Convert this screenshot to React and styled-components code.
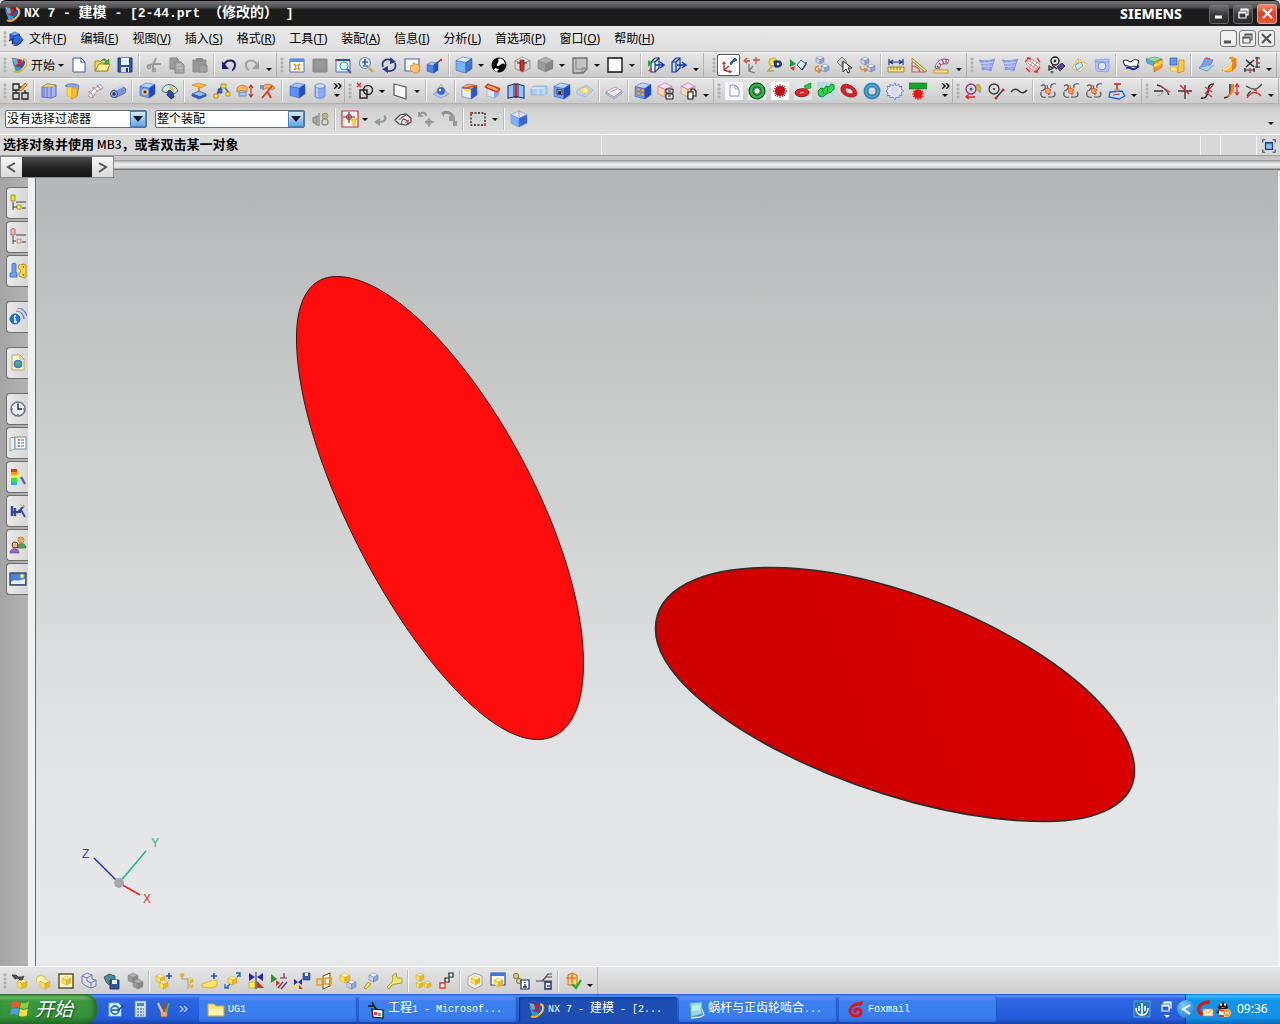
import React from 'react'
import styled, { createGlobalStyle, css } from 'styled-components'

const GlobalStyle = createGlobalStyle`
  * {
    box-sizing: border-box;
  }
  body {
    margin: 0;
    font-family: "Noto Sans", "Noto Sans CJK SC", sans-serif;
    font-size: 12px;
    color: #000;
    background: #d4d4d4;
  }
  button, select {
    font: inherit;
    color: inherit;
    margin: 0;
    padding: 0;
    border: 0;
    background: none;
  }
`

/* ---------- icon shapes: [path, fill, stroke, stroke width] ---------- */

const N = 'none'
const circ = (x, y, r) => `M${x - r} ${y}a${r} ${r} 0 1 0 ${2 * r} 0a${r} ${r} 0 1 0 ${-2 * r} 0z`
const rect = (x, y, w, h) => `M${x} ${y}h${w}v${h}h${-w}z`

const cube = (x, y, s, top = '#b4dcff', left = '#5b93f5', right = '#2a55c8', line = '#3457a8') => [
  [`M${x} ${y + s * 0.24}L${x + s * 0.5} ${y}L${x + s} ${y + s * 0.24}L${x + s * 0.5} ${y + s * 0.46}z`, top, line, 0.5],
  [`M${x} ${y + s * 0.24}L${x + s * 0.5} ${y + s * 0.46}V${y + s}L${x} ${y + s * 0.76}z`, left, line, 0.5],
  [`M${x + s} ${y + s * 0.24}L${x + s * 0.5} ${y + s * 0.46}V${y + s}L${x + s} ${y + s * 0.76}z`, right, line, 0.5],
]
// seen slightly from the right: wide front face, narrow side face
const box = (x, y, s, front = '#6c9ffa', top = '#b4d8ff', side = '#1f49c0', line = '#3450a8') => [
  [`M${x} ${y + s * 0.22}l${s * 0.62} ${s * 0.12}v${s * 0.66}l${-s * 0.62} ${-s * 0.16}z`, front, line, 0.5],
  [`M${x} ${y + s * 0.22}l${s * 0.4} ${-s * 0.22}l${s * 0.6} ${s * 0.1}l${-s * 0.38} ${s * 0.24}z`, top, line, 0.5],
  [`M${x + s * 0.62} ${y + s * 0.34}l${s * 0.38} ${-s * 0.24}v${s * 0.64}l${-s * 0.38} ${s * 0.26}z`, side, line, 0.5],
]
const gold = (x, y, s) => cube(x, y, s, '#fff7a8', '#ffe04a', '#e8b82c', '#c8a43a')
const pale = (x, y, s) => cube(x, y, s, '#eef4ff', '#c4d2f0', '#93a6d4', '#6a7aa8')
const grayBox = (x, y, s) => cube(x, y, s, '#b0b0b0', '#9a9a9a', '#868686', '#808080')
const nx = [
  ['M2 5l4 11c3 1 5 0 6-2L8 9z', '#2a9ec8', N],
  ['M9 10l5-7c2 3 1 7-3 10z', '#2458c8', N],
  ['M2 2l10 2-3 7-4-2z', '#e01c28', '#a81020', 0.5],
  ['M2 2l5 1 1 5-3 1z', '#58b8d0', N],
  ['M13 3c5 1 4 7 0 10-3 3-7 4-9 2', N, '#f2a81c', 2],
  ['M14 4c3 1 2 6-2 9', N, '#fff0a0', 0.8],
]
const page = (x, y, w, h, f = '#fff', k = '#3a57a8') => [
  [`M${x} ${y}h${w - 4}l4 4v${h - 4}h${-w}z`, f, k, 1],
  [`M${x + w - 4} ${y}v4h4`, N, k, 1],
]
const curve = (accent) => [
  ['M2 4c3-2 5-1 4 2-1 2-2 3-4 3M2 10c-1 4 1 6 5 5', N, '#555', 1.2],
  ['M17 2c-4-1-6 1-5 4M9 15h4c3 0 4-3 2-5', N, '#555', 1.2],
  ['M6 6l6 2M8 3l2 10', N, accent, 1.2],
  ['M6 6l5 1v5l-4-1z', '#ffa24a', '#e0482a', 0.7],
]

const ICONS = {
  nx,
  part: [
    ...cube(2, 1, 11, '#68a4ff', '#2766d8', '#143e9c', '#14387c'),
    ['M6 6l6-2 5 6-5 5-7-1z', '#2b69d5', '#0e2f7d', 0.8],
    ['M1 11l4-2v6M6 16h4l5-3', N, '#172c5e', 1.4],
  ],
  new: page(3, 2, 12, 14),
  open: [
    ['M2 15V5h5l2 2h6v8z', '#f3d45c', '#a68b20', 1],
    ['M2 15l4-7h11l-3 7z', '#ffee98', '#a68b20', 1],
    ['M8 5c2-3 4-3 6 0l2-2v5h-5l2-2c-2-2-3-2-5-1z', '#44b830', '#217818', 0.5],
  ],
  save: [
    [rect(2, 2, 14, 14), '#32549f', '#1d3470', 1],
    [rect(5, 2, 8, 7), '#e6f3ff', N],
    [rect(5, 11, 8, 5), '#d7dce8', N],
    [rect(10, 12, 2, 4), '#24345c', N],
  ],
  cut: [
    ['M11 2L8 9v6M2 10l6-2h8', N, '#9c9c9c', 2],
    [circ(4, 11, 1.6), N, '#9c9c9c', 1.6],
    [circ(9, 14, 1.6), N, '#9c9c9c', 1.6],
  ],
  copy: [
    ['M2 2h7l2 3v8H2z', '#9c9c9c', '#858585', 1],
    ['M7 6h6l3 3v8H7z', '#a8a8a8', '#858585', 1],
    ['M9 9h4M9 12h5', N, '#ccc', 1],
  ],
  paste: [
    [rect(2, 4, 13, 12), '#989898', '#8a8a8a', 1],
    [rect(5, 2, 7, 4), '#8b8b8b', N],
    ['M8 9h8v7H8z', '#9f9f9f', '#8a8a8a', 1],
  ],
  undo: [['M4 9c2-6 11-6 11 0 0 3-2 5-3 5', N, '#16206c', 2], ['M2 5v8h7z', '#16206c', N]],
  redo: [['M14 9c-2-6-11-6-11 0 0 3 2 5 3 5', N, '#a1a1a1', 2], ['M16 5v8H9z', '#a1a1a1', N]],
  fit: [
    [rect(2, 3, 14, 13), '#fff', '#4a70b8', 1],
    [rect(2, 3, 14, 3), '#5a90e0', N],
    ['M6 8l6 6M12 8l-6 6', N, '#f08a20', 1.8],
    ['M8 10h2v2H8z', '#fff', N],
  ],
  fill: [[rect(2, 3, 14, 13), '#929292', '#8a8a8a', 1], ['M5 6h8v7H5z', '#999', N]],
  zoomArea: [
    [rect(2, 4, 14, 12), '#e3eefc', '#3f6fc0', 1],
    ['M2 4h14', N, '#2850a8', 2],
    [circ(10, 10, 4), '#d2f6fa', '#558e9c', 1],
    ['M13 13l4 4', N, '#2a62c4', 2],
    [circ(2, 4, 1), '#e33', N],
    [circ(16, 16, 1), '#e33', N],
  ],
  zoom: [
    [circ(8, 7, 5.5), '#d8eeff', '#7a8cb0', 1.2],
    ['M5 6h6M8 3v6M6 10h5', N, '#17307c', 1.2],
    ['M12 12l4 4', N, '#d39b4a', 2.4],
  ],
  rotate: [
    ['M3 11C1 5 6 2 11 4M15 7c2 6-3 10-9 7', N, '#273d88', 1.8],
    ['M10 1l6 5-6 2zM8 17l-6-4 6-3z', '#273d88', N],
  ],
  pan: [
    [rect(2, 3, 14, 12), '#f4f8ff', '#4f70a8', 1.2],
    ['M8 9l2 1V7h2v2l3-1 2 4-2 5h-4l-4-4z', '#ffc76c', '#cf8426', 0.7],
  ],
  perspective: [
    ...box(1, 6, 11, '#4c86ec', '#9cc8ff', '#2450b8'),
    ['M8 9l7-5', N, '#26459c', 1.2],
    [circ(15, 4, 1.3), '#e02828', N],
  ],
  shaded: box(1, 1, 16, '#74b4fa', '#d8eeff', '#3f74d4'),
  bw: [
    [circ(9, 9, 7), '#000', '#000', 1],
    ['M8 3c4-2 7 2 7 6-3-4-4 1-8 1-1-3 3-3 1-7zM5 12l4 1-2 3-3-2z', '#fff', N],
  ],
  section: [
    ...cube(2, 1, 15, '#f7eeee', '#e6d5d5', '#d8d0d0', '#555'),
    ['M7 4h4v10l-2 1-2-1z', '#c82f2f', '#7e1919', 0.8],
    ['M4 7h3M11 7h3', N, '#333', 1],
  ],
  grayCube: grayBox(2, 1, 15),
  sheet: [
    ['M2 2h14v11l-4 4H2z', '#c2c2c2', '#707070', 1.3],
    ['M5 2v11h11M11 17v-5h5', N, '#858585', 1],
  ],
  white: [[rect(2, 2, 14, 14), '#fff', '#111', 1.4]],
  clipA: [
    ['M4 6l4-4h4v10l-4 4H4z', '#eaf2ff', '#17378c', 1.2],
    ['M4 6h4v10M8 6l4-4', N, '#17378c', 1.2],
    ['M8 9h8M13 6l4 3-4 3', N, '#1437b4', 1.5],
    ['M1 4l4 3-4 4z', '#29a42e', N],
    ['M1 15l4-4v5z', '#df3428', N],
  ],
  clipB: [
    ['M2 6l4-4h4v10l-4 4H2z', '#c4d9fa', '#17378c', 1.2],
    ['M2 6h4v10M6 6l4-4', N, '#17378c', 1.2],
    ['M7 9h8M12 6l4 3-4 3', N, '#1437b4', 1.5],
  ],
  csys: [
    ['M4 8v6l6 2M4 14l5-4', N, '#c5302a', 1.4],
    ['M2 8l2-3 2 3zM9 14l4 2-4 1z', '#c5302a', N],
    ['M10 7l5-5 2 2-4 2-2 3z', '#2f61c4', '#18357c', 0.8],
  ],
  csysOrigin: [
    ['M1 5h6M4 2L1 5l3 2M10 4h7M13 1v7', N, '#d64c38', 1.3],
    ['M6 8v7l6 2M6 15l4-5', N, '#777', 1.3],
  ],
  csysView: [
    [circ(7, 6, 4), '#ffe33c', '#c0a424', 1],
    ['M8 5h4c4-1 5 5 1 6H9z', '#203b98', '#0c1d5c', 1],
    [circ(12, 8, 1.3), '#ff8', N],
    ['M6 10l-4 5h6', N, '#b8a04a', 1.4],
  ],
  moveLayer: [
    ['M1 3l6 5-6 3z', '#24983a', N],
    ['M1 12l5-2-1 5z', '#e03426', N],
    ['M8 9l4-5 5 4-4 6z', '#dce8fc', '#3b5b9c', 1],
    ['M13 14l4-6v-2', N, '#223e87', 1.3],
  ],
  stackA: [
    ...pale(4, 0, 8),
    ...pale(9, 8, 8),
    ['M7 10c-4 0-5 4-2 5h3M6 12l3 3-3 2', N, '#dd8735', 1.4],
  ],
  pick: [
    ['M2 6l5-5 5 5-5 5zM7 11V6', '#cdd0d7', '#777', 1],
    ['M8 5v11l3-3 2 4 2-1-2-4h4z', '#fff', '#222', 1],
  ],
  stackB: [
    ...pale(3, 1, 8),
    ...pale(9, 8, 8),
    ['M2 10c0 4 2 4 6 4M6 12l3 2-3 2', N, '#e0862a', 1.3],
  ],
  distance: [
    ['M2 3v6M16 3v6M3 6h12M6 4L3 6l3 2M12 4l3 2-3 2', N, '#1a3290', 1.2],
    [rect(1, 11, 16, 5), '#ffe785', '#a5812b', 1],
    ['M4 11v3M7 11v3M10 11v3M13 11v3', N, '#8b6c25', 1],
  ],
  angle: [
    ['M2 2l15 13-2 1L2 5z', '#ffe787', '#a88a30', 1],
    ['M2 6v10h13M2 10c5 0 7 2 8 6', N, '#d45050', 1.2],
  ],
  arc: [
    ['M2 12C3 5 9 1 16 4l-2 4C9 7 7 9 6 13z', '#e8e6f8', '#7056a0', 1],
    ['M4 10l2 2M6 7l2 2M9 4l2 4M13 3v4', N, '#d0342b', 1.2],
    [rect(1, 14, 14, 3), '#ffe384', '#b58b35', 0.8],
  ],
  surface: [
    ['M1 4c5 1 10 1 16-1-2 4-3 8-4 12-4-2-6-2-9-1 1-4-1-7-3-10z', '#8f9ff4', '#6a7ee0', 0.6],
    ['M2 7c5 1 8 0 13-1M4 10c4 1 6 0 10 0', N, '#c8d2ff', 1.2],
    ['M6 5l2 8M11 4l-1 9', N, '#b8c4ff', 0.8],
  ],
  mesh: [
    ['M2 8l6-5 8 5-6 8z', '#fdf5ef', '#c88878', 0.8],
    ['M4 7l8 6M6 5l8 6M10 4l-5 8M13 6l-5 8', N, '#9a8078', 0.8],
    ['M1 6l4-4M3 2h3v2M16 6l-3-4M16 11l-4 5M14 16h-3v-2M2 12l4 4', N, '#e33020', 1.3],
  ],
  wheel: [
    [circ(8, 5, 4), N, '#222', 1.4],
    [circ(8, 5, 1.3), '#222', N],
    ['M2 10l4 2-4 2zM5 9l5 4', N, '#222', 1.2],
    ['M10 11l5-4 3 3-5 5z', '#58429a', '#2a174b', 0.8],
    [circ(5, 16, 1.6), '#3b8e4a', N],
  ],
  sheetGold: [
    ['M2 12l6-9 9 5-7 8z', '#fff3ba', '#d9b352', 0.9],
    ['M6 7l7 2M9 4l-3 8M12 6l-4 7', N, '#f0a631', 1],
    ['M5 9l6-3 2 4-6 4z', '#c8eaff', '#4e8ed0', 0.8],
  ],
  surfaceB: [
    ['M2 4l14-1v9l-1 4-12-1z', '#b7c9fb', '#7f96e0', 0.7],
    [circ(9, 10, 4), '#dce7ff', '#5d7bd0', 0.9],
    ['M2 6h14', N, '#7892df', 0.8],
  ],
  sew: [
    ['M1 5c3-2 5 0 8 1 2-3 5-3 8-1l-2 6c-3-2-5 0-7 0-2-1-3-2-5-1z', '#fafaff', '#222', 1],
    ['M4 12c4-2 5 2 8 1 2 0 3-2 5-3', N, '#192b92', 2],
  ],
  thicken: [
    ['M1 3l9-2 7 2-8 3z', '#8be4a2', '#58a070', 0.7],
    ['M1 3l8 3v4L2 7z', '#48b4e0', '#428fb0', 0.7],
    ['M9 6l8-3v8l-8 5z', '#ff9b23', '#be5c12', 0.7],
    ['M9 10l8-4', N, '#ffe94b', 2],
  ],
  trimSheet: [
    [rect(2, 2, 7, 7), '#5a9af2', '#2a5bb0', 0.7],
    ['M11 4h5v11l-6 2v-6z', '#ffc942', '#c77d15', 0.7],
    ['M2 11h7v5l-6-1z', '#ffe574', '#d8a840', 0.7],
  ],
  offsetFace: [
    ['M2 12c3-3 4-6 6-10l8 2c-2 4-3 7-6 11z', '#7f9cf0', '#5c7ccc', 0.7],
    ['M2 12l8 3 7-6', '#a8d8e8', '#5c8ccc', 0.7],
    ['M9 2l4 1', N, '#e24b3a', 1.3],
  ],
  bend: [
    ['M9 2l3 1c0 5-3 9-10 11l6 2c5-1 6-3 8-5V3l-4-2z', '#ffbd2b', '#d87314', 0.7],
    ['M12 3l4-1v9l-4 5z', '#f07f18', N],
    ['M3 14c5-1 8-4 9-8', N, '#fff08a', 1.4],
  ],
  xform: [
    ['M3 4l8 7M11 4L3 11', N, '#262626', 1.4],
    ['M14 1v11M12 2h5M12 11h5M1 14h11M2 12v4M11 12v4', N, '#262626', 1.2],
    ['M13 7h4M7 12v5', N, '#db2f2f', 1.4],
  ],
  sketch: [
    ['M2 2h6v6H2zM2 11h6v6H2zM11 11h6v6h-6zM8 5h3M5 8v3M14 8v3', N, '#222', 1.3],
    ['M8 8l6-7 2 2-6 6z', '#ffb729', '#bc4f19', 0.8],
  ],
  extrude: [
    ['M2 5l5-3 9 1v11l-5 2-9-1z', '#a8b4f4', '#5568b8', 1],
    ['M7 4v11M11 5v10M4 5v10', N, '#6a7ed0', 1.2],
    ['M2 5l5-3 9 1-4 2z', '#f4dc9a', '#b8983c', 0.8],
  ],
  revolve: [
    ['M2 4c2-3 12-3 14 0l-2 10-5 3V6z', '#88a8f4', '#5070c0', 0.7],
    ['M4 5h5v12l-5-4z', '#ffdc4a', '#d09c28', 0.7],
    ['M9 6h5v8l-5 3z', '#ffc030', '#d09c28', 0.7],
  ],
  sweep: [
    ['M2 14l5-6 7-6 3 4-6 3-5 7z', '#f4f2fb', '#8c8ea8', 0.8],
    ['M2 10c3-1 4 2 5 6M6 6c3-1 4 2 6 4M11 3l4 5', N, '#c47a7a', 1],
  ],
  tube: [
    ['M3 9l10-5 4 3-1 4-10 5z', '#7c90dc', '#4c5c9c', 0.8],
    ['M6 8l8-4', N, '#c8d6fa', 2],
    [circ(5, 12, 3.5), '#aab6df', '#3c4a82', 1],
    [circ(5, 12, 1.8), '#263568', N],
  ],
  hole: [...box(2, 1, 15), [circ(7, 10, 2.7), '#f5903a', '#f8d8c0', 0.8], [circ(7, 10, 1.2), '#333', N]],
  trimBody: [
    ['M1 9c1-8 12-9 16 0l-4 3-4-4-4 3z', '#cdeae0', '#3f6686', 1],
    ['M8 8l4 3 1 4-3 2-4-4z', '#304b9b', '#172956', 0.8],
    ['M9 5l4 4', N, '#f6a927', 2],
  ],
  pad: [
    ['M2 3l6-2 8 2-5 3z', '#ffbc38', '#c77d22', 0.7],
    ['M8 5h2v5H8z', '#e78d30', N],
    ['M2 12l7-3 7 3-6 3z', '#8cc0ff', '#254e9b', 0.7],
    ['M2 12v2l7 3 7-3v-2l-6 3z', '#3468c8', '#254e9b', 0.7],
  ],
  link: [
    ['M3 15l3-7 4-5 6 8', N, '#2e51ac', 1.3],
    [rect(1, 12, 4, 4), '#ffd928', '#a37a16', 0.7],
    [rect(5, 7, 4, 4), '#4069cc', '#1d3273', 0.7],
    [rect(8, 2, 5, 4), '#e8d838', '#8c8018', 0.7],
    [rect(13, 10, 4, 4), '#ffd928', '#a37a16', 0.7],
  ],
  scale: [
    ['M1 6c3-4 8-3 10-1v5c-3-2-6-2-10 0z', '#ffb457', '#c8703a', 0.8],
    ['M3 10h7v4H3z', '#a1c6fa', '#4774b9', 0.7],
    ['M15 3v12M13 6l2-3 2 3M13 12l2 3 2-3', N, '#c7281d', 1.1],
  ],
  flange: [
    ['M2 6c3-5 11-5 14 0l-3 2c-3-3-6-2-9 0z', '#ffb249', '#c06838', 0.8],
    ['M3 16L13 4M12 16L8 9', N, '#d83827', 1.8],
    [rect(1, 3, 4, 4), '#6d91df', N],
  ],
  blockB: box(2, 1, 15, '#5c92fa', '#9cc8ff', '#254dc2'),
  cylinder: [
    ['M4 4v10c0 3 10 3 10 0V4', '#8ba8f8', '#5f78cc', 0.8],
    ['M4 4c0-3 10-3 10 0s-10 3-10 0z', '#cfddff', '#5f78cc', 0.8],
    ['M6 6v9', N, '#c6d4ff', 1.5],
  ],
  curveSketch: [
    [rect(4, 8, 7, 8), N, '#222', 1.4],
    [circ(12, 8, 4.5), N, '#222', 1.4],
    ['M1 1l4 4M5 1L1 5', N, '#e22', 1.3],
  ],
  plane: [['M3 2l12 3v12L3 13z', '#f8f8f8', '#555', 1.2]],
  datum: [
    ['M1 12l8 4 8-4-8-4z', '#b8cdfa', '#7c94cc', 0.8],
    ['M3 11l6-9 6 9', N, '#cf8a66', 0.8],
    [circ(9, 9, 3.5), '#376dd4', '#20468f', 0.6],
    [circ(8, 8, 1.2), '#dff0ff', N],
  ],
  edgeBlend: [
    ...box(1, 2, 15, '#e8eeff', '#ffb04a', '#2c58cc'),
    ['M2 6c3 1 7-2 14-2', N, '#e0482a', 1.3],
    ['M3 8l7 1', N, '#ffd84a', 2],
  ],
  faceBlend: [
    ...box(3, 4, 12, '#d6e6ff', '#ffe0c0', '#8cb0e4', '#8098c8'),
    ['M1 5l12 5M3 2l13 5M1 5l4-3M13 10l3-3', N, '#e23b1e', 1.6],
    ['M4 4l9 4', N, '#ffb04a', 1.4],
  ],
  draft: [
    ['M1 4l6-2v13l-6 1zM11 2l6 2v12l-6-1z', '#92c6f6', '#1d3f82', 1.1],
    ['M9 2v14', N, '#d22', 2.2],
    ['M7 2h4M7 15h4', N, '#222', 1],
  ],
  shellFlat: [
    ['M1 6l3-2h13v7l-3 2H1z', '#a8ccf4', '#7da4d4', 0.7],
    ['M1 6h13v7M8 6v7', N, '#e4f2ff', 1],
  ],
  shell: [...box(1, 1, 16), ['M4 7l5 1v5l-5-1z', '#ffa24a', '#192b79', 0.8], [rect(5, 9, 3, 3), '#432', N]],
  boss: [
    ['M1 8l9-5 7 5-7 7-9-3z', '#b6d7fa', '#8cb0dc', 0.7],
    ['M4 8c1-4 10-3 9 1s-9 3-9-1z', '#ffe36a', '#dab450', 0.7],
    [circ(9, 8, 2), '#fff3a8', N],
  ],
  slab: [
    ['M1 10l9-5 7 4-8 6z', '#f4f2f8', '#8a8da8', 0.7],
    ['M1 10v2l8 5 8-6V9l-8 6z', '#cccde2', '#8a8da8', 0.7],
    ['M5 10l7-3', N, '#d87a78', 1],
  ],
  pattern: [
    ...box(1, 1, 16),
    [rect(3, 6, 3, 3), '#ffb13d', '#a24a17', 0.4],
    [rect(7, 7, 3, 3), '#ffb13d', '#a24a17', 0.4],
    [rect(3, 10, 3, 3), '#ffb13d', '#a24a17', 0.4],
    [rect(7, 11, 3, 3), '#ffb13d', '#a24a17', 0.4],
  ],
  group: [
    ...cube(1, 1, 14, '#f9e3ff', '#ffe0a1', '#ffc87f', '#c744b4'),
    [rect(9, 7, 7, 4), '#fff', '#111', 1],
    [rect(9, 12, 7, 5), '#fff', '#111', 1],
    ['M11 9h3M11 14h3', N, '#111', 1],
  ],
  groupCopy: [
    ...cube(1, 1, 14, '#f9e3ff', '#ffe0a1', '#ffc87f', '#c744b4'),
    ['M8 10h5v7H8zM11 10V7h3l2 2v5h-3', '#fff', '#111', 1.1],
  ],
  gearPage: [[rect(0, 0, 18, 18), '#f5f5ff', N], ...page(5, 3, 9, 11, '#fff', '#8c96ce')],
  gearRing: [
    [rect(0, 0, 18, 18), '#e2eee6', N],
    [circ(9, 9, 6), N, '#073c12', 5],
    [circ(9, 9, 6), N, '#32b44c', 3],
    [circ(9, 9, 3.2), '#e6f6ea', '#0c5c1c', 0.8],
  ],
  gearRed: [
    [rect(0, 0, 18, 18), '#fff', N],
    [circ(9, 9, 5), '#d61616', N],
    ['M9 2v14M2 9h14M4 4l10 10M14 4L4 14M6 3l6 12M12 3L6 15M3 6l12 6M3 12l12-6', N, '#b41414', 1],
  ],
  gearPair: [
    [rect(0, 0, 18, 18), '#dbe8e7', N],
    ['M1 11c0-5 13-6 14-1s-13 7-14 1z', '#ea2020', '#9a1010', 1],
    ['M5 11c1-2 6-2 6-1s-6 3-6 1z', '#f7b8b8', '#8c1010', 0.6],
    ['M10 4l4-2 3-1v5l-5 1z', '#2fc33e', '#167722', 0.6],
  ],
  worm: [
    [rect(0, 0, 18, 18), '#b8dce2', N],
    ['M1 9l3-3 3 1 2-3 3 1 2-3 3 1v4l-3 3-3 1-3 2-2 2-4-1z', '#2ed448', '#168c28', 1],
    ['M5 7l2 5M10 5l1 5', N, '#168c28', 1],
  ],
  gearOval: [
    ['M1 6c1-6 9-4 13 0s4 9-2 9S0 11 1 6z', '#e21e1e', '#9c1010', 0.8],
    ['M5 7c1-2 5-1 7 1s1 4-2 4-5-3-5-5z', '#f2dede', '#8c1010', 0.8],
  ],
  gearBlue: [[circ(9, 9, 6), N, '#2f86bc', 5], [circ(9, 9, 6), N, '#58a4d0', 1.4]],
  gearThin: [
    ['M9 1l1 3 3-2v3l3-1-1 3 3 2-3 2 1 3-3-1v3l-3-1-1 3-2-3-3 1v-3l-3 1 1-3-2-2 2-2-1-3 3 1V2l3 2z', '#e5e9ff', '#7c8cda', 1],
    [circ(9, 9, 4.5), '#dcdcdc', N],
  ],
  rack: [
    [rect(0, 1, 18, 6), '#19a52d', '#0e6f1c', 0.6],
    [circ(9, 12, 4.5), '#ef1515', N],
    ['M4 9l10 6M14 9L4 15M9 7v11M3 12h12M6 8l6 9M12 8l-6 9', N, '#ef1515', 1.2],
  ],
  curveCirc: [
    [circ(7, 7, 5), N, '#a72a76', 1.3],
    [circ(7, 7, 1.5), '#3c50b4', N],
    ['M2 15h9M5 12l-3 3 3 2', N, '#d72c2c', 1.3],
    ['M12 3l3-1 2 4-1 5-3-3z', '#c1b84f', '#a39a44', 0.7],
  ],
  circleLine: [
    [circ(7, 7, 5), N, '#333', 1.3],
    [circ(7, 7, 1), '#333', N],
    ['M9 16l7-8', N, '#333', 1.3],
    [circ(9, 16, 1.5), '#d22', N],
    [circ(16, 8, 1.5), '#d22', N],
  ],
  spline: [['M1 10c3-4 6-3 8-1s5 3 8-1', N, '#333', 1.4]],
  bridgeA: curve('#3a50d2'),
  bridgeB: curve('#e46521'),
  bridgeC: curve('#9c4b24'),
  project: [
    ['M2 10l12-1 3 5-6 3-10-2z', '#c6e4ff', '#2758d4', 1.3],
    ['M5 13l7-1', N, '#d22', 1.2],
    ['M6 2h7M9 2v6', N, '#c42a24', 1.5],
    ['M6 7h6l-3 3z', '#f08a2a', N],
  ],
  trimA: [['M1 9h9M4 3c5 1 10 5 12 10', N, '#333', 1.3], ['M4 14c4-1 6-3 7-5', N, '#9ab0a8', 1.2], ['M7 4l10 6', N, '#d33', 1.4]],
  trimB: [['M2 9h14M9 3v14', N, '#333', 1.3], ['M4 3l9 9', N, '#d33', 1.5]],
  trimC: [
    ['M15 2c-7 0-5 5-6 8s-2 7-7 6', N, '#222', 1.6],
    ['M6 5l7 5M6 12l8-9M8 11l5 4', N, '#d33', 1.2],
  ],
  stretch: [
    ['M8 2v8c0 4-2 5-6 6', N, '#222', 1.5],
    ['M9 2h3c1 6-1 12-8 13 5-3 5-7 5-13z', '#f38728', N],
    ['M15 2v10M13 5l2-3 2 3M13 10l2 3 2-3', N, '#d33', 1.3],
  ],
  curveEdit: [['M1 4c4 2 6 4 10 3 3-1 4-3 6-5M6 9c-2 1-3 3-4 5', N, '#444', 1.3], ['M2 16c4-7 10-7 14-2M8 7l4 2', N, '#d33', 1.5]],
  chain: [
    ['M1 8l4-2v9l-4-3zM7 3v13', '#aaa', '#8c8c8c', 1.3],
    [circ(13, 6, 3), '#b3b38f', '#98987c', 1],
    [circ(13, 12, 3), N, '#98987c', 1.6],
  ],
  snap: [
    [rect(1, 1, 16, 16), '#faf1ea', '#c8323c', 1.2],
    ['M8 2v11M2 7h12', N, '#8a2630', 1.2],
    [circ(8, 7, 2.5), N, '#8a2630', 1],
    ['M9 9l3 3v4h2v-4l3-5-3 2z', '#ffd72c', '#d8a424', 0.6],
  ],
  back: [['M13 6c3 2 1 6-4 6', N, '#919b94', 2.2], ['M9 8v8l-6-4z', '#919b94', N]],
  solidSel: [
    ['M1 10l5-5 6-1 5 4v4l-5 3-7-1z', '#f0f0f4', '#444', 1.2],
    ['M8 15c-1-4 0-5 2-6l4 2v4M7 8l5-3', N, '#444', 1.1],
    ['M5 10l5-4M11 13l4-3', N, '#d8526a', 1.1],
  ],
  snapPoint: [
    ['M2 6c2-5 7-4 7 0M2 2v4h4', N, '#919191', 1.7],
    ['M12 8v9M8 12h9', N, '#919191', 1.3],
    [circ(12, 12, 2.5), N, '#919191', 1],
  ],
  snapBox: [
    ['M2 4c4-3 8-2 11 2', N, '#919191', 3],
    ['M2 4l2-2v5z', '#919191', N],
    ['M9 6h6v5h2v5h-4v-5H9z', '#9a9a9a', N],
  ],
  lasso: [],
  viewCube: [
    ...cube(1, 1, 16, '#d7e7ff', '#7eb2fa', '#3866d4', '#6589d0'),
    ['M9 0v7', N, '#d47a7a', 0.9],
  ],
  fullscreen: [
    [rect(5, 5, 8, 8), '#3b75ca', '#1b3b78', 1.2],
    [rect(6, 7, 6, 5), '#91bff4', N],
    ['M2 5V2h3M13 2h3v3M16 13v3h-3M5 16H2v-3', N, '#3b4a62', 1.3],
  ],
  asmNav: [
    [rect(2, 1, 4, 6), '#f0e72c', '#8d8714', 0.8],
    [rect(8, 11, 4, 4), '#fff836', '#8d8714', 0.8],
    ['M4 8v8M4 13h4M7 8h10M13 14h4', N, '#444', 1],
  ],
  partNav: [
    ['M2 2c1-2 4-2 4 0v5H2z', '#f4b9b9', '#a44a4a', 0.8],
    [rect(8, 11, 4, 4), '#f0d3d3', '#c47a7a', 0.8],
    ['M4 8v8M4 13h3M7 7h10M13 14h4', N, '#444', 1],
  ],
  reuse: [
    ['M3 2c1-1 3-1 4 0v9h1v4H1v-4h2z', '#6ba1f1', '#3565ba', 0.8],
    ['M10 3l5-1 2 1v12l-2 1-5-2v-3l2-1-1-3-2-1z', '#ffd740', '#a88922', 0.9],
    [circ(14.5, 5, 0.8), '#421', N],
    [circ(14.5, 13, 0.8), '#421', N],
  ],
  info: [
    [circ(6, 11, 5), '#1f7ad0', '#0d4b94', 0.8],
    ['M6 10v4M5 14h3M5 10h1', N, '#fff', 1.4],
    [circ(6, 8, 1), '#fff', N],
    ['M7 3c5 0 8 4 8 8M8 0c5 0 9 4 10 8', N, '#6280c4', 1.2],
  ],
  web: [
    ...page(3, 1, 12, 15, '#fffbd0', '#b5ab60'),
    [circ(9, 10, 4), '#3a8ed8', '#205ca8', 0.6],
    ['M6 9c2-3 4 1 6-1l-2 4z', '#58b85c', N],
  ],
  clock: [
    [circ(9, 9, 7), '#eff6fc', '#66788a', 1.6],
    ['M9 4v5h4', N, '#142448', 1.4],
    ['M9 3v1M9 14v1M3 9h1M14 9h1', N, '#345', 1],
  ],
  palette: [
    ['M1 4l5-1v12l-5 2z', '#e5f0f0', '#86989c', 0.8],
    [rect(6, 3, 11, 12), '#fcfeff', '#6b7f90', 0.9],
    ['M9 6h2M9 12h2', N, '#d02c44', 1.7],
    ['M9 9h2', N, '#2c9c54', 1.7],
    ['M12 6h3M12 9h3M12 12h3', N, '#3567a8', 1],
  ],
  rainbow: [
    [rect(2, 1, 6, 3), '#d83c27', N],
    [rect(2, 4, 6, 3), '#ff9c16', N],
    [rect(2, 7, 6, 3), '#f2f326', N],
    [rect(2, 10, 6, 4), '#2ee63d', N],
    [rect(2, 14, 6, 3), '#28b8e8', N],
    ['M12 9l4 7', N, '#5460b4', 2.4],
    ['M10 4l4 4M15 3l-4 6', N, '#f2e65e', 1],
  ],
  tools: [
    ['M3 4v10M6 6v8', N, '#3945a2', 2.5],
    ['M2 10h10M8 11l7-7M12 8l4 7', N, '#384588', 1.8],
    ['M10 2l5 3M4 16l4-2', N, '#ddd44a', 1],
  ],
  people: [
    [circ(12, 4, 3), '#e8ad64', '#b87836', 0.8],
    ['M8 12c0-6 9-6 9 0z', '#4fa253', '#2d6c32', 0.6],
    [circ(6, 9, 3), '#e3b08a', '#7c3d2c', 1],
    ['M1 17c0-6 9-6 9 0z', '#9866c8', '#63418c', 0.6],
  ],
  picture: [
    [rect(1, 3, 16, 12), '#4c82d8', '#455266', 1.4],
    ['M2 12c4-4 6 0 9-2l5-1v5H2z', '#e4f1ff', N],
    [circ(13, 6, 2), '#e8f84b', N],
  ],
  find: [...gold(6, 7, 10), ['M1 3h4l2 2h4l2-1-2 4H9L7 6 4 7z', '#555', '#333', 0.8]],
  openComp: [...gold(6, 7, 10), ['M2 10l1-5 4-2 4 2v3', '#fff3a0', '#b8c068', 0.9]],
  boxComp: [[rect(2, 2, 14, 14), '#fff8c0', '#5b5332', 1.5], ...gold(5, 4, 9)],
  wire: [['M2 4l5-3 5 2v4l4 1v6l-5 2-5-2-4-3zM7 9V6l5-3M2 4l5 2M11 16v-5l5-3M7 9l4 2', '#dce0f4', '#6874a0', 0.9]],
  saveComp: [
    ['M1 5l5-3 6 2v7l-6 2-3-3z', '#4a8a90', '#284c60', 0.8],
    [rect(7, 8, 9, 9), '#34579b', '#172e68', 0.8],
    [rect(9, 8, 5, 4), '#e4f1ff', N],
  ],
  grayComp: [...grayBox(2, 1, 10), ...grayBox(7, 7, 10)],
  addComp: [...gold(1, 2, 9), ...gold(4, 8, 9), ['M14 1v6M11 4h6', N, '#2855ba', 1.6]],
  tree: [['M4 2v5h6v10M10 9h4', N, '#a8a070', 1], ...gold(2, 1, 4), ...gold(10, 6, 5), ...gold(11, 12, 4)],
  addGold: [['M1 12l9-3 6-1v6l-6 2-9-1z', '#ffe564', '#cda940', 0.8], ['M13 1v6M10 4h6', N, '#2855ba', 1.6]],
  move: [...gold(4, 4, 9), ['M2 16l4-4M1 12v4h4M13 5l3-3M12 1h4v4', N, '#2b67c4', 1.4]],
  mirror: [
    ['M2 1l6 4-6 4zM16 1l-6 4 6 4z', '#2527a8', N],
    ['M9 0v17', N, '#222', 1],
    [rect(2, 10, 6, 6), '#ffef36', '#a28622', 0.5],
    ['M10 16h7l-7-7z', '#dc2828', N],
  ],
  constrain: [
    ['M1 2l6 5-6 4z', '#24972f', N],
    ['M6 8l4 3-4 3z', '#d83028', N],
    ['M10 6h7M14 1v5M8 16l5-6M11 17l6-7', N, '#7a2852', 1.2],
  ],
  mirrorSave: [
    ['M1 7l4 3-4 3zM9 7l-4 3 4 3z', '#2527a8', N],
    [rect(1, 13, 3, 3), '#ffe92c', N],
    ['M6 17h4l-4-4z', '#dc2828', N],
    [rect(10, 1, 7, 7), '#3c5aa8', '#1c3578', 0.6],
    [rect(12, 1, 3, 3), '#fff', N],
  ],
  explode: [
    ['M7 4l7-3v13l-7 3z', '#fff5df', '#79551f', 1.1],
    ['M1 7h5v6H1zM9 6h6v6H9z', N, '#f09518', 1.4],
  ],
  twoComp: [...gold(1, 1, 10), ...pale(8, 8, 9)],
  replace: [...pale(7, 1, 9), ['M2 16l4-6 3 2-5 5z', '#ffe44a', '#a78b25', 0.8]],
  wrench: [['M2 15l5-5c1-1 1-5 0-6l4-3 1 5h5v5l-6 1-4 1-3 4z', '#f2e46a', '#9d9340', 0.9]],
  three: [...gold(2, 1, 8), ...gold(2, 9, 7), ...gold(10, 9, 7)],
  nodes: [
    [rect(12, 1, 4, 4), '#fff', '#222', 1.2],
    [rect(8, 6, 4, 4), '#fff', '#222', 1.2],
    [rect(3, 11, 5, 5), '#fff', '#e13820', 1.4],
  ],
  ghost: [['M2 5l7-4 7 3v9l-7 4-7-4z', '#f8f8ee', '#9a9a90', 0.9], ...gold(5, 4, 9)],
  windowComp: [
    [rect(2, 1, 14, 12), '#fff', '#2747a4', 1.2],
    [rect(2, 1, 14, 3), '#3f77e0', N],
    ...gold(5, 6, 9),
  ],
  chainInfo: [
    [circ(4, 4, 2.5), '#d8d48c', '#8b8648', 1.2],
    [circ(7, 9, 2.5), '#d8d48c', '#8b8648', 1.2],
    [rect(9, 8, 8, 9), '#fff', '#1d2f70', 1.2],
    ['M13 12v3M13 10v1M11 15h4', N, '#1d2f70', 1.4],
  ],
  relation: [
    ['M1 9h6l4-4h6M7 9h10M9 7l4-5h4', N, '#444', 1.1],
    [rect(10, 10, 6, 7), '#e8ecff', '#1c2768', 1.4],
    ['M12 14h3', N, '#1c2768', 1.2],
  ],
  check: [
    ['M4 3l4-2 5 2v10H4z', '#ffd66a', '#c66a2a', 1],
    ['M2 6h10M8 2v9', N, '#e3573c', 1.2],
    ['M8 12l4 4 5-8', N, '#2aa62a', 2.2],
  ],
  outlook: [
    [rect(2, 3, 12, 13), '#e9f6ff', '#8ec0ea', 0.8],
    [circ(8, 10, 4), N, '#2776c8', 1.8],
    ['M5 10h7M12 3l4 3-6 5', N, '#174c94', 1.4],
  ],
  calc: [
    [rect(4, 1, 11, 16), '#d3e3fa', '#6a8cc4', 0.8],
    [rect(6, 3, 7, 3), '#5a82c0', N],
    ['M6 9h2M9 9h2M12 9h1M6 12h2M9 12h2M12 12h1M6 15h2M9 15h2M12 15h1', N, '#5976ac', 1.4],
  ],
  brushes: [
    ['M5 9h8l-1 8H6z', '#d8a888', '#8b5838', 0.8],
    ['M7 12L3 3', N, '#d8c49a', 2.2],
    ['M9 12V2', N, '#c43b30', 2],
    ['M11 12l3-9', N, '#58b04a', 2],
  ],
  folder: [
    ['M1 15V3h6l2 2h8v10z', '#ffe27a', '#d8a83a', 1],
    ['M2 8h14v6H2z', '#fff2ae', N],
  ],
  vb: [
    ['M1 5h6l3 4M5 1l2 4', N, '#111', 1.6],
    ['M5 8l11 1v8l-10-1z', '#fff', '#111', 1.2],
    [rect(7, 11, 3, 3), '#e33', N],
    [rect(11, 12, 3, 3), '#3b8', N],
  ],
  notepad: [
    ['M3 2l12-1v12l-11 3z', '#8edbe2', '#5b9dac', 0.9],
    ['M5 5l8-1v5l-8 1z', '#b8f0ee', N],
    ['M15 8l2 6-4 2-9 1', N, '#d5e6e8', 1.3],
  ],
  foxmail: [
    ['M15 2C8 3 3 5 3 10c0 6 11 7 11 1 0-3-4-4-6-2v3', N, '#d91818', 3],
    ['M8 4l8-4-2 5z', '#d91818', N],
  ],
  anchor: [
    [rect(1, 1, 16, 16), '#2676bc', '#5da4dc', 1],
    ['M9 3v12M3 8c0 5 3 7 6 7s6-2 6-7M6 6v5M12 6v5', N, '#fff', 1.6],
  ],
  foxTray: [
    ['M14 2C7 2 1 6 3 11c1 4 8 4 9 1', N, '#d91818', 3.4],
    [rect(7, 9, 10, 7), '#fff2cf', '#d58b3a', 0.8],
    ['M7 9l5 4 5-4', N, '#d58b3a', 0.8],
  ],
  penguin: [
    ['M4 10C3 0 15 0 14 10l2 3H2z', '#16181c', N],
    ['M5 9h8v6c-2 3-6 3-8 0z', '#fff', N],
    ['M4 8c3 2 7 2 10 0v2c-3 2-7 2-10 0z', '#e02a2a', N],
    ['M5 16h5', N, '#e02a2a', 2],
    [circ(7, 4.5, 1.2), '#fff', N],
    [circ(11, 4.5, 1.2), '#fff', N],
    ['M6 7h6l-3 1z', '#f4a020', N],
    [circ(13, 13, 3.8), '#f09a28', '#f8d8a0', 0.6],
    ['M11 13h4', N, '#fff', 1.4],
  ],
  windows: [
    ['M2 4c3-2 5-1 7 0L8 9C6 8 4 8 1 9z', '#f0552c', N],
    ['M10 4c2 1 4 1 7-1l-1 6c-3 1-5 1-7 0z', '#8fd03c', N],
    ['M1 10c3-1 5-1 7 0l-1 6c-2-2-4-2-7-1z', '#4d9cf2', N],
    ['M9 10c2 1 4 1 7 0l-1 6c-3 1-5 1-7 0z', '#ffd83a', N],
  ],
}

const Svg = styled.svg`
  display: block;
  flex: none;
`

const Icon = ({ name, size = 18 }) => (
  <Svg width={size} height={size} viewBox="0 0 18 18" aria-hidden="true">
    {name === 'lasso' && (
      <rect x="2" y="3" width="14" height="12" fill="none" stroke="#222" strokeWidth="1.3" strokeDasharray="2 1.5" />
    )}
    {name === 'lasso' && <path d="M1 2h2v2H1zM15 14h2v2h-2z" fill="#d33" />}
    {ICONS[name].map(([d, fill, stroke, w], i) => (
      <path key={i} d={d} fill={fill} stroke={stroke} strokeWidth={w} />
    ))}
  </Svg>
)

/* ---------- layout ---------- */

const Screen = styled.div`
  display: flex;
  flex-direction: column;
  width: 100%;
  min-height: 100vh;
`

const TitleBar = styled.header`
  display: flex;
  align-items: center;
  height: 26px;
  padding: 0 3px;
  color: #fff;
  border-top: 1px solid #000;
  border-radius: 6px 6px 0 0;
  background: linear-gradient(#77777a 0, #5c5c5f 4px, #48484a 7px, #1c1c1c 8px, #1c1c1c 100%);
`

const Title = styled.h1`
  flex: 1;
  margin: 0 0 0 3px;
  font: bold 14px/20px "Liberation Mono", "Noto Sans CJK SC", monospace;
  white-space: pre;
`

const Latin = styled.span`
  font-size: ${(p) => p.$size}px;
  font-weight: ${(p) => p.$weight || 'inherit'};
`

const Brand = styled.span`
  margin-right: 27px;
  font: 800 14px/20px "Noto Sans", sans-serif;
`

const WindowButtons = styled.div`
  display: flex;
  gap: ${(p) => (p.$light ? 2 : 4)}px;
`

const WindowButton = styled.button`
  display: flex;
  align-items: center;
  justify-content: center;
  width: 20px;
  height: 20px;
  border: 1px solid #666;
  border-radius: 3px;
  background: linear-gradient(#77777a, #3c3c3e 50%, #2a2a2c);
  ${(p) => p.$close && css`
    border-color: #f0a090;
    background: linear-gradient(#f08a70, #dd4022 50%, #e85a38);
  `}
`

const ChildButton = styled.button`
  display: flex;
  align-items: center;
  justify-content: center;
  width: 17px;
  height: 17px;
  border: 1px solid #777;
  border-radius: 3px;
  background: #f0f0f0;
`

const MenuBar = styled.nav`
  display: flex;
  align-items: center;
  height: 26px;
  padding: 0 5px 0 0;
  background: linear-gradient(#e9e9e9, #dedede);
  border-bottom: 1px solid #bdbdbd;
`

const MenuList = styled.div`
  display: flex;
  flex: 1;
  gap: 14px;
  margin-left: 5px;
`

const MenuItem = styled.button`
  line-height: 18px;
  white-space: nowrap;
`

const ToolRow = styled.div`
  display: flex;
  height: 26px;
  background: linear-gradient(#e6e6e6, #cbcbcb);
  border-top: 1px solid #f6f6f6;
  border-bottom: 1px solid #b4b4b4;
`

const ToolGroup = styled.div`
  display: flex;
  align-items: center;
  flex: none;
  padding-right: 1px;
  margin-right: ${(p) => p.$after || 0}px;
  border-right: 1px solid #b2b2b2;
`

const Grip = styled.span`
  width: 8px;
  height: 16px;
  flex: none;
  background: radial-gradient(circle at 5px 2px, #b0b0b0 1px, transparent 2px) 0 0 / 8px 4px;
`

const ToolButton = styled.button`
  display: flex;
  align-items: center;
  justify-content: center;
  flex: none;
  width: 23px;
  height: 22px;
  ${(p) => p.$on && css`
    border: 1px solid #555;
    border-radius: 2px;
    background: #fff;
  `}
`

const StartButton = styled.button`
  display: flex;
  align-items: center;
  flex: none;
  gap: 3px;
  width: 59px;
  padding-left: 2px;
  white-space: nowrap;
`

const Rule = styled.span`
  flex: none;
  width: 2px;
  height: 22px;
  margin: 0 2px;
  border-left: 1px solid #bcbcbc;
  border-right: 1px solid #f8f8f8;
`

const Caret = styled.span`
  flex: none;
  width: 0;
  height: 0;
  border: 3px solid transparent;
  border-top-color: #000;
  border-bottom-width: 0;
`

const CaretButton = styled.button`
  display: flex;
  flex-direction: column;
  align-items: center;
  justify-content: ${(p) => (p.$low ? 'flex-end' : 'center')};
  flex: none;
  gap: 5px;
  width: ${(p) => (p.$narrow ? 7 : 12)}px;
  height: 22px;
  padding-bottom: ${(p) => (p.$low ? 5 : 0)}px;
  margin-left: ${(p) => (p.$gap ? 10 : 0)}px;
`

const SelectionBar = styled.div`
  display: flex;
  align-items: center;
  height: 30px;
  padding: 0 3px 0 5px;
  background: linear-gradient(#bebebe, #d2d2d2 5px, #dedede);
`

const Combo = styled.label`
  display: flex;
  flex: none;
  width: ${(p) => p.$width}px;
  height: 18px;
  margin-right: ${(p) => p.$after}px;
  border: 1px solid #5c7080;
  border-radius: 2px;
  background: #fff;
`

const ComboSelect = styled.select`
  flex: 1;
  min-width: 0;
  padding-left: 1px;
  line-height: 16px;
  appearance: none;
  outline: none;
`

const ComboArrow = styled.span`
  display: flex;
  align-items: center;
  justify-content: center;
  width: 16px;
  border: 1px solid #4a85c0;
  background: linear-gradient(#d5edff, #62a8e8);
`

const BigCaret = styled.span`
  border: 5px solid transparent;
  border-top: 6px solid #101828;
  border-bottom-width: 0;
`

const Filler = styled.span`
  flex: 1;
`

const PromptBar = styled.div`
  display: flex;
  height: 22px;
  border-top: 1px solid #fff;
  border-bottom: 1px solid #9c9c9c;
  background: #d9d9d9;
`

const PromptCell = styled.div`
  display: flex;
  align-items: center;
  flex: ${(p) => p.$flex};
  padding: 0 0 3px 3px;
  border-right: 1px solid #f4f4f4;
  font: bold 13px/18px "Noto Sans CJK SC", sans-serif;
  white-space: pre;
`

const Band = styled.div`
  position: relative;
  height: 15px;
  background: linear-gradient(#c6c6c6 0, #c6c6c6 4px, #8e8e8e 4px, #c8c8c8 6px, #f0f0f0 8px, #d6d6d6 12px, #777 13px, #777 14px, #b4b4b4 14px);
`

const DockedBar = styled.div`
  position: absolute;
  top: 0;
  left: 0;
  z-index: 2;
  display: flex;
  width: 114px;
  height: 22px;
  background: linear-gradient(#4c4c4c, #2a2a2a 40%, #141414);
  border: 1px solid #8b8b8b;
  justify-content: space-between;
`

const DockedArrow = styled.button`
  display: flex;
  align-items: center;
  justify-content: center;
  width: 21px;
  background: linear-gradient(#f8f8f8, #d8d8d8);
`

const Workspace = styled.main`
  display: flex;
  flex: 1;
`

const ResourceBar = styled.aside`
  display: flex;
  flex-direction: column;
  gap: 2px;
  flex: none;
  width: 28px;
  padding: 16px 0 0 6px;
  background: linear-gradient(90deg, #a4a4a4, #b2b2b2);
`

const ResourceTab = styled.button`
  display: flex;
  align-items: center;
  justify-content: center;
  width: 22px;
  height: 32px;
  margin-bottom: ${(p) => (p.$gap ? 12 : 0)}px;
  border: 1px solid #6e6e6e;
  border-right: 0;
  border-radius: 4px 0 0 4px;
  background: linear-gradient(90deg, #eaeaea, #d6d6d6);
`

const Viewport = styled.section`
  display: flex;
  flex: 1;
  min-width: 0;
  border-left: 7px solid #f0f0f0;
  border-right: 2px solid #f4f4f4;
  background: linear-gradient(#b5b6b7, #cbcccc 32%, #e2e3e4 72%, #e7e9ea);
`

const Model = styled.svg`
  flex: 1;
  min-width: 0;
  border-left: 1px solid #6c6c6c;
`

const AxisLabel = styled.text`
  font: 12px "Liberation Sans", sans-serif;
`

const BottomTools = styled.div`
  display: flex;
  height: 28px;
  border-top: 1px solid #fff;
  background: linear-gradient(#e6e6e6, #cecece);
`

const Taskbar = styled.footer`
  display: flex;
  height: 30px;
  color: #fff;
  background: linear-gradient(#1c56c8 0, #4c92f4 2px, #2c66e0 5px, #245cdc 24px, #1a44a8 30px);
`

const TaskStart = styled.button`
  display: flex;
  align-items: center;
  gap: 5px;
  flex: none;
  width: 97px;
  padding: 0 0 3px 10px;
  border-radius: 0 12px 12px 0;
  background: linear-gradient(#2a7a2a 0, #6cbc64 3px, #3c9840 7px, #34903a 23px, #226a26 30px);
  box-shadow: inset -3px 0 4px #246a28;
  font: italic 19px/26px "Noto Sans CJK SC", sans-serif;
  text-shadow: 1px 1px 2px #14401a;
`

const QuickLaunch = styled.div`
  display: flex;
  align-items: center;
  flex: none;
  gap: 6px;
  width: 102px;
  padding-left: 10px;
`

const TaskList = styled.div`
  display: flex;
  flex: 1;
  gap: 2px;
  min-width: 0;
  padding-top: 3px;
`

const Task = styled.button`
  display: flex;
  align-items: center;
  gap: 3px;
  flex: 0 1 158px;
  min-width: 0;
  height: 25px;
  padding-left: 8px;
  border-radius: 2px;
  background: ${(p) => (p.$active ? '#1e4eb4' : 'linear-gradient(#5a9af8 0, #3c80f0 4px, #3a7cec 21px, #2c68d8)')};
  box-shadow: ${(p) => (p.$active ? 'inset 1px 1px 2px #10307c' : 'inset -1px 0 1px #2458c0')};
  font: 12px/18px "Liberation Mono", "Noto Sans CJK SC", monospace;
  white-space: pre;
`

const LangBar = styled.div`
  display: flex;
  align-items: center;
  gap: 9px;
  flex: none;
  width: 52px;
`

const LangOptions = styled.button`
  display: flex;
  flex-direction: column;
  align-items: center;
  gap: 2px;
`

const WhiteCaret = styled(Caret)`
  border-top-color: #fff;
`

const Tray = styled.div`
  display: flex;
  align-items: center;
  flex: none;
  width: 95px;
  border-left: 1px solid #0c3c98;
  background: linear-gradient(#1278d0 0, #38b8f8 2px, #1494e8 6px, #1290e4 24px, #0c68b8 30px);
`

const TrayToggle = styled.button`
  display: flex;
  align-items: center;
  justify-content: center;
  width: 18px;
  height: 18px;
  margin: 0 1px 0 -9px;
  border-radius: 50%;
  background: radial-gradient(circle at 6px 5px, #78ccfc, #1468c8);
`

const Clock = styled.time`
  margin-left: 5px;
  font: 12px/18px "Noto Sans", sans-serif;
`

/* ---------- parts ---------- */

// Latin runs are set smaller than the Chinese glyphs around them
const Mixed = ({ text, size, weight }) =>
  text.split(/([\x20-\x7e]+)/).map((part, i) =>
    i % 2 ? <Latin key={i} $size={size} $weight={weight}>{part}</Latin> : part
  )

const Chevrons = ({ color = '#000' }) => (
  <Svg width="9" height="6" viewBox="0 0 9 6" aria-hidden="true">
    <path d="M1 0l3 3-3 3M5 0l3 3-3 3" fill="none" stroke={color} strokeWidth="1.4" />
  </Svg>
)

const Glyph = ({ kind, color = '#fff' }) => (
  <Svg width="13" height="13" viewBox="0 0 13 13" aria-hidden="true">
    {kind === 'min' && <path d="M2 10h7" stroke={color} strokeWidth="3" />}
    {kind === 'restore' && (
      <path d="M4 4V2h7v6H9M4 3h7M2 5h7v6H2zM2 6h7" fill="none" stroke={color} strokeWidth="1.2" />
    )}
    {kind === 'close' && <path d="M2 2l9 9M11 2l-9 9" stroke={color} strokeWidth="2.2" />}
    {kind === 'left' && <path d="M10 2L3 6l7 5" fill="none" stroke={color} strokeWidth="2" />}
    {kind === 'right' && <path d="M3 2l7 4-7 5" fill="none" stroke={color} strokeWidth="2" />}
  </Svg>
)

// '|' rule, 'v' drop-down, '.' overflow, '>' overflow with chevrons, '*' pressed
const Tools = ({ items, after, children }) => (
  <ToolGroup $after={after}>
    <Grip />
    {children}
    {items.split(' ').map((item, i) => {
      if (item === '|') return <Rule key={i} />
      if (item === 'v') return <CaretButton key={i} aria-label="drop-down"><Caret /></CaretButton>
      if (item === '.') return <CaretButton key={i} $low aria-label="options"><Caret /></CaretButton>
      if (item === '>' || item === '>>') {
        return (
          <CaretButton key={i} $low $gap={item === '>>'} aria-label="more">
            <Chevrons />
            <Caret />
          </CaretButton>
        )
      }
      const name = item.replace('*', '')
      return (
        <ToolButton key={i} $on={item !== name} aria-label={name}>
          <Icon name={name} />
        </ToolButton>
      )
    })}
  </ToolGroup>
)

const MENUS = [
  ['文件', 'F'], ['编辑', 'E'], ['视图', 'V'], ['插入', 'S'], ['格式', 'R'], ['工具', 'T'],
  ['装配', 'A'], ['信息', 'I'], ['分析', 'L'], ['首选项', 'P'], ['窗口', 'O'], ['帮助', 'H'],
]

const TABS = [
  ['asmNav'], ['partNav'], ['reuse', true], ['info', true], ['web', true],
  ['clock'], ['palette'], ['rainbow'], ['tools'], ['people'], ['picture'],
]

const TASKS = [
  ['folder', 'UG1'],
  ['vb', '工程1 - Microsof...'],
  ['nx', 'NX 7 - 建模 - [2...', true],
  ['notepad', '蜗杆与正齿轮啮合...'],
  ['foxmail', 'Foxmail'],
]

const SelectionTool = ({ name }) => (
  <ToolButton aria-label={name}>
    <Icon name={name} />
  </ToolButton>
)

const App = () => {
  return (
    <Screen>
      <GlobalStyle />
      <TitleBar>
        <Icon name="nx" />
        <Title><Mixed text="NX 7 - 建模 - [2-44.prt （修改的） ]" size={13} /></Title>
        <Brand>SIEMENS</Brand>
        <WindowButtons>
          <WindowButton aria-label="minimize"><Glyph kind="min" /></WindowButton>
          <WindowButton aria-label="restore"><Glyph kind="restore" /></WindowButton>
          <WindowButton $close aria-label="close"><Glyph kind="close" /></WindowButton>
        </WindowButtons>
      </TitleBar>

      <MenuBar>
        <Grip />
        <Icon name="part" size={16} />
        <MenuList>
          {MENUS.map(([label, key]) => (
            <MenuItem key={label}>{label}(<u>{key}</u>)</MenuItem>
          ))}
        </MenuList>
        <WindowButtons $light>
          <ChildButton aria-label="minimize"><Glyph kind="min" color="#555" /></ChildButton>
          <ChildButton aria-label="restore"><Glyph kind="restore" color="#555" /></ChildButton>
          <ChildButton aria-label="close"><Glyph kind="close" color="#555" /></ChildButton>
        </WindowButtons>
      </MenuBar>

      <ToolRow>
        <Tools items="new open save | cut copy paste | undo redo .">
          <StartButton>
            <Icon name="nx" />
            开始
            <Caret />
          </StartButton>
        </Tools>
        <Tools
          after={5}
          items="fit fill zoomArea zoom rotate pan perspective | shaded v bw section grayCube v sheet v white v | clipA clipB ."
        />
        <Tools items="*csys csysOrigin csysView moveLayer stackA pick stackB | distance angle arc ." />
        <Tools items="surface surface mesh wheel sheetGold surfaceB | sew thicken trimSheet | offsetFace bend xform ." />
      </ToolRow>

      <ToolRow>
        <Tools items="sketch | extrude revolve sweep tube | hole trimBody | pad link scale flange | blockB cylinder >" />
        <Tools items="curveSketch v plane v | datum | edgeBlend faceBlend draft shellFlat shell boss | slab | pattern group groupCopy ." />
        <Tools items="gearPage gearRing gearRed gearPair worm gearOval gearBlue gearThin rack >>" />
        <Tools items="curveCirc circleLine spline | bridgeA bridgeB bridgeC project ." />
        <Tools items="trimA trimB trimC stretch curveEdit ." />
      </ToolRow>

      <SelectionBar>
        <Combo $width={142} $after={8}>
          <ComboSelect aria-label="filter"><option>没有选择过滤器</option></ComboSelect>
          <ComboArrow><BigCaret /></ComboArrow>
        </Combo>
        <Combo $width={150} $after={4}>
          <ComboSelect aria-label="scope"><option>整个装配</option></ComboSelect>
          <ComboArrow><BigCaret /></ComboArrow>
        </Combo>
        <SelectionTool name="chain" />
        <Rule />
        <SelectionTool name="snap" />
        <CaretButton $narrow aria-label="drop-down"><Caret /></CaretButton>
        <SelectionTool name="back" />
        <SelectionTool name="solidSel" />
        <SelectionTool name="snapPoint" />
        <SelectionTool name="snapBox" />
        <Rule />
        <SelectionTool name="lasso" />
        <CaretButton aria-label="drop-down"><Caret /></CaretButton>
        <Rule />
        <SelectionTool name="viewCube" />
        <Filler />
        <CaretButton $low aria-label="options"><Caret /></CaretButton>
      </SelectionBar>

      <PromptBar>
        <PromptCell $flex="0 0 47%">
          <span><Mixed text="选择对象并使用 MB3，或者双击某一对象" size={12} weight={500} /></span>
        </PromptCell>
        <PromptCell $flex="1" />
        <PromptCell $flex="0 0 20px" />
        <PromptCell $flex="0 0 36px" />
        <ToolButton aria-label="full screen"><Icon name="fullscreen" size={16} /></ToolButton>
      </PromptBar>

      <Band>
        <DockedBar>
          <DockedArrow aria-label="scroll left"><Glyph kind="left" color="#555" /></DockedArrow>
          <DockedArrow aria-label="scroll right"><Glyph kind="right" color="#555" /></DockedArrow>
        </DockedBar>
      </Band>

      <Workspace>
        <ResourceBar>
          {TABS.map(([name, gap]) => (
            <ResourceTab key={name} $gap={gap} aria-label={name}><Icon name={name} /></ResourceTab>
          ))}
        </ResourceBar>
        <Viewport>
          <Model viewBox="36 171 1242 795" role="img" aria-label="model">
            <defs>
              <linearGradient id="disc" x1="0" x2="1" y1="0.6" y2="0.4">
                <stop offset="0.2" stopColor="#ce0000" />
                <stop offset="1" stopColor="#da0000" />
              </linearGradient>
            </defs>
            <path
              d="M336.5 276.5C431.6 276.5 583.5 514.3 583.5 663.5C583.5 712.1 566.9 739.5 537.5 739.5C450.3 739.5 296.5 483.3 296.5 338C296.5 298.4 310.9 276.5 336.5 276.5z"
              fill="#ff0d0d"
              stroke="#3a1010"
            />
            <path
              d="M771 567.5C925 567.5 1134.5 684 1134.5 771C1134.5 802.6 1101 821.5 1045 821.5C880 821.5 655.5 710.6 655.5 629C655.5 590.5 698.7 567.5 771 567.5z"
              fill="url(#disc)"
              stroke="#2c2c2c"
              strokeWidth="1.6"
            />
            <path d="M119 883l27-32" stroke="#18b880" strokeWidth="1.5" />
            <path d="M119 883L94 858" stroke="#2828c8" strokeWidth="1.5" />
            <path d="M119 883l21 12" stroke="#e82828" strokeWidth="1.8" />
            <circle cx="119" cy="883" r="5" fill="#a8a8a8" />
            <AxisLabel x="82" y="858" fill="#3838c8">Z</AxisLabel>
            <AxisLabel x="151" y="847" fill="#28b888">Y</AxisLabel>
            <AxisLabel x="143" y="903" fill="#e83030">X</AxisLabel>
          </Model>
        </Viewport>
      </Workspace>

      <BottomTools>
        <Tools items="find openComp boxComp wire saveComp grayComp | addComp tree addGold move mirror constrain mirrorSave explode twoComp replace wrench | three nodes | ghost windowComp chainInfo relation | check ." />
      </BottomTools>

      <Taskbar>
        <TaskStart>
          <Icon name="windows" size={20} />
          开始
        </TaskStart>
        <QuickLaunch>
          <Icon name="outlook" />
          <Icon name="calc" />
          <Icon name="brushes" />
          <Chevrons color="#a8c8ff" />
        </QuickLaunch>
        <TaskList>
          {TASKS.map(([icon, label, active]) => (
            <Task key={label} $active={active}>
              <Icon name={icon} />
              <span><Mixed text={label} size={10} /></span>
            </Task>
          ))}
        </TaskList>
        <LangBar>
          <Icon name="anchor" />
          <LangOptions aria-label="language options">
            <Glyph kind="restore" />
            <WhiteCaret />
          </LangOptions>
        </LangBar>
        <Tray>
          <TrayToggle aria-label="show icons"><Glyph kind="left" /></TrayToggle>
          <Icon name="foxTray" />
          <Icon name="penguin" />
          <Clock>09:36</Clock>
        </Tray>
      </Taskbar>
    </Screen>
  )
}

export default App
